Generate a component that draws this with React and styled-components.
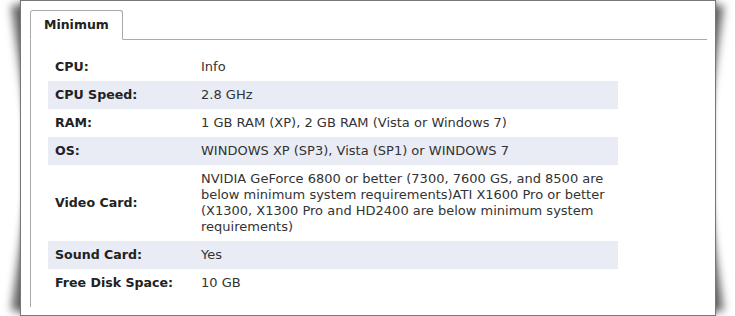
import React from 'react';
import styled, { createGlobalStyle } from 'styled-components';

const Global = createGlobalStyle`
  html, body {
    margin: 0;
    padding: 0;
    background: #fff;
  }
  body {
    font-family: "DejaVu Sans", Verdana, sans-serif;
    font-size: 13px;
    color: #333;
  }
`;

const Shell = styled.div`
  position: relative;
  isolation: isolate;
  width: 735px;
  height: 316px;
  padding: 0 19px 0 20px;
  box-sizing: border-box;
  overflow: hidden;

  /* curled shadows, left side */
  &::before,
  &::after {
    content: '';
    position: absolute;
    z-index: -1;
    left: 22px;
    width: 20px;
    height: 110px;
    background: #fff;
    box-shadow: -11px 0 8px rgba(0, 0, 0, 0.6);
  }
  &::before {
    top: 4px;
    transform-origin: top left;
    transform: rotate(-8deg);
  }
  &::after {
    bottom: 4px;
    transform-origin: bottom left;
    transform: rotate(8deg);
  }
`;

const Frame = styled.div`
  position: relative;
  height: 100%;
  box-sizing: border-box;
  border: 1px solid #777;
  background: #fff;
  padding: 9px 8px 8px 9px;
  display: flex;
  flex-direction: column;
  box-shadow: 0 0 3px rgba(0, 0, 0, 0.18);

  /* curled shadows, right side */
  &::before,
  &::after {
    content: '';
    position: absolute;
    z-index: -1;
    right: 2px;
    width: 20px;
    height: 110px;
    background: #fff;
    box-shadow: 11px 0 8px rgba(0, 0, 0, 0.6);
  }
  &::before {
    top: 3px;
    transform-origin: top right;
    transform: rotate(8deg);
  }
  &::after {
    bottom: 3px;
    transform-origin: bottom right;
    transform: rotate(-8deg);
  }
`;

const TabBar = styled.div`
  display: flex;
  align-items: flex-end;
  height: 29px;
  border-bottom: 1px solid #aaa;
`;

const Tab = styled.div`
  height: 28px;
  margin-bottom: -1px;
  padding: 0 13px;
  box-sizing: content-box;
  border: 1px solid #aaa;
  border-bottom-color: #fff;
  border-radius: 3px 3px 0 0;
  background: #fff;
  font-weight: bold;
  font-size: 12.5px;
  line-height: 28px;
  color: #222;
`;

const Panel = styled.div`
  flex: 1;
  border-left: 1px solid #aaa;
  padding: 13px 0 0 17px;
`;

const Table = styled.table`
  width: 570px;
  border-collapse: collapse;
`;

const Row = styled.tr`
  background: ${(p) => (p.$striped ? '#e9ecf4' : 'transparent')};
`;

const Label = styled.th`
  width: 132px;
  padding: 6px 7px;
  text-align: left;
  vertical-align: middle;
  font-weight: bold;
  font-size: 12.6px;
  line-height: 16px;
  color: #222;
  white-space: nowrap;
`;

const Value = styled.td`
  padding: 6px 7px;
  vertical-align: middle;
  line-height: 16px;
  color: #333;
`;

const specs = [
  ['CPU:', 'Info'],
  ['CPU Speed:', '2.8 GHz'],
  ['RAM:', '1 GB RAM (XP), 2 GB RAM (Vista or Windows 7)'],
  ['OS:', 'WINDOWS XP (SP3), Vista (SP1) or WINDOWS 7'],
  [
    'Video Card:',
    'NVIDIA GeForce 6800 or better (7300, 7600 GS, and 8500 are below minimum system requirements)ATI X1600 Pro or better (X1300, X1300 Pro and HD2400 are below minimum system requirements)',
  ],
  ['Sound Card:', 'Yes'],
  ['Free Disk Space:', '10 GB'],
];

export default function App() {
  return (
    <>
      <Global />
      <Shell>
        <Frame>
          <TabBar>
            <Tab>Minimum</Tab>
          </TabBar>
          <Panel>
            <Table>
              <tbody>
                {specs.map(([k, v], i) => (
                  <Row key={k} $striped={i % 2 === 1}>
                    <Label>{k}</Label>
                    <Value>{v}</Value>
                  </Row>
                ))}
              </tbody>
            </Table>
          </Panel>
        </Frame>
      </Shell>
    </>
  );
}
